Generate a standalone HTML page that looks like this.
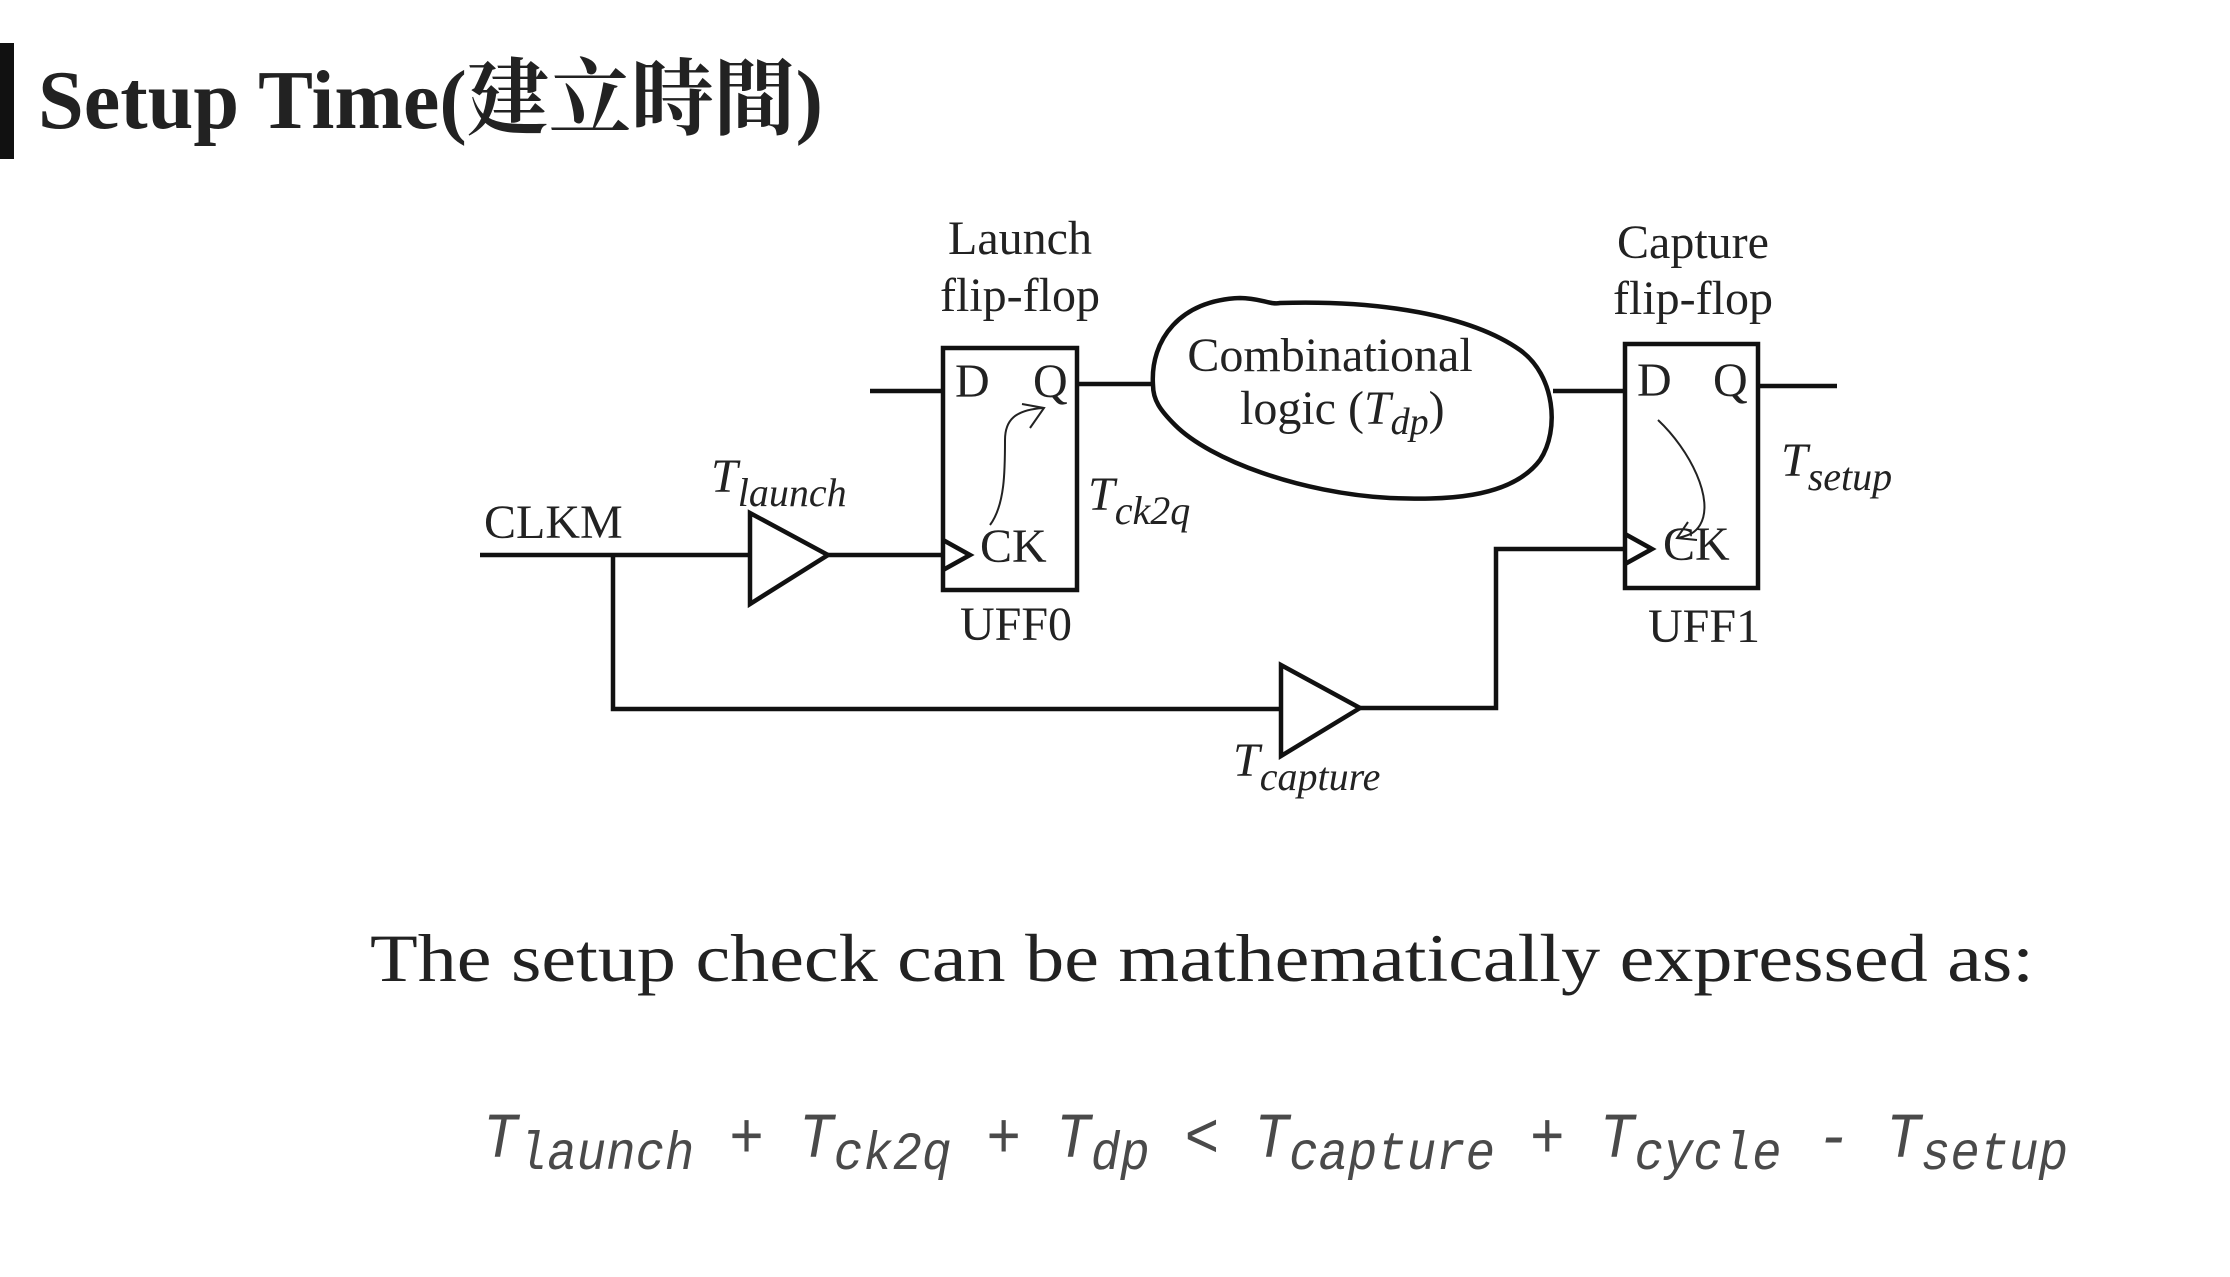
<!DOCTYPE html>
<html><head><meta charset="utf-8"><style>
html,body{margin:0;padding:0;background:#fff;width:2230px;height:1277px;overflow:hidden}
svg{display:block}
.s{font-family:"Liberation Serif","Noto Serif CJK SC",serif;fill:#222}
.i{font-style:italic}
.m{font-family:"Liberation Mono",monospace;fill:#4a4a4a;font-style:italic}
</style></head><body>
<svg width="2230" height="1277" viewBox="0 0 2230 1277" xmlns="http://www.w3.org/2000/svg">
<rect x="0" y="43" width="14" height="116" fill="#111"/>
<text x="38" y="128" class="s" font-size="84" font-weight="bold" fill="#111" textLength="785" lengthAdjust="spacingAndGlyphs">Setup Time(建立時間)</text>

<g fill="none" stroke="#111" stroke-width="4.5">
<rect x="943" y="348" width="134" height="242"/>
<rect x="1625" y="344" width="133" height="244"/>
<path d="M870 391H943M1077 384H1153M1553 391H1625M1758 386H1837"/>
<path d="M480 555H750M828 555H943"/>
<path d="M750 513V604L828 555Z"/>
<path d="M943 540L970 555L943 570"/>
<path d="M613 555V709H1281M1360 708H1496V549H1625"/>
<path d="M1281 665V756L1360 708Z"/>
<path d="M1625 534L1652 549L1625 564"/>
<path d="M1153 385C1150 340 1180 300 1240 298C1260 298 1270 305 1280 303C1380 300 1470 315 1520 350C1555 375 1560 430 1540 460C1510 500 1440 500 1390 498C1300 493 1210 460 1175 425C1160 410 1153 400 1153 385Z"/>
</g>
<g fill="none" stroke="#222" stroke-width="2">
<path d="M990 525C1005 505 1005 470 1005 440C1005 420 1015 410 1043 408M1022 404L1044 408L1030 428"/>
<path d="M1658 420C1690 450 1715 500 1700 525C1695 533 1690 535 1678 538M1688 522L1677 538L1697 540"/>
</g>

<g class="s" font-size="48">
<text x="1020" y="254" text-anchor="middle">Launch</text>
<text x="1020" y="311" text-anchor="middle">flip-flop</text>
<text x="1693" y="258" text-anchor="middle">Capture</text>
<text x="1693" y="314" text-anchor="middle">flip-flop</text>
<text x="1330" y="371" text-anchor="middle">Combinational</text>
<text x="1240" y="424">logic (<tspan class="i">T</tspan><tspan class="i" font-size="38" dy="10">dp</tspan><tspan dy="-10">)</tspan></text>
<text x="955" y="397">D</text><text x="1033" y="397">Q</text>
<text x="980" y="562">CK</text>
<text x="1637" y="396">D</text><text x="1713" y="396">Q</text>
<text x="1663" y="560">CK</text>
<text x="960" y="640">UFF0</text>
<text x="1648" y="642">UFF1</text>
<text x="484" y="538">CLKM</text>
<text x="711" y="492" class="i">T<tspan font-size="40" dy="14">launch</tspan></text>
<text x="1088" y="510" class="i">T<tspan font-size="40" dy="14">ck2q</tspan></text>
<text x="1781" y="476" class="i">T<tspan font-size="40" dy="14">setup</tspan></text>
<text x="1233" y="776" class="i">T<tspan font-size="40" dy="14">capture</tspan></text>
</g>

<text x="370" y="981" class="s" font-size="68" fill="#1a1a1a" textLength="1664" lengthAdjust="spacingAndGlyphs">The setup check can be mathematically expressed as:</text>

<g class="m">
<text x="483" y="1157" font-size="64" textLength="1585" lengthAdjust="spacingAndGlyphs">T<tspan font-size="54" dy="12">launch</tspan><tspan dy="-12"> + T</tspan><tspan font-size="54" dy="12">ck2q</tspan><tspan dy="-12"> + T</tspan><tspan font-size="54" dy="12">dp</tspan><tspan dy="-12"> &lt; T</tspan><tspan font-size="54" dy="12">capture</tspan><tspan dy="-12"> + T</tspan><tspan font-size="54" dy="12">cycle</tspan><tspan dy="-12"> - T</tspan><tspan font-size="54" dy="12">setup</tspan></text>
</g>
</svg>
</body></html>
